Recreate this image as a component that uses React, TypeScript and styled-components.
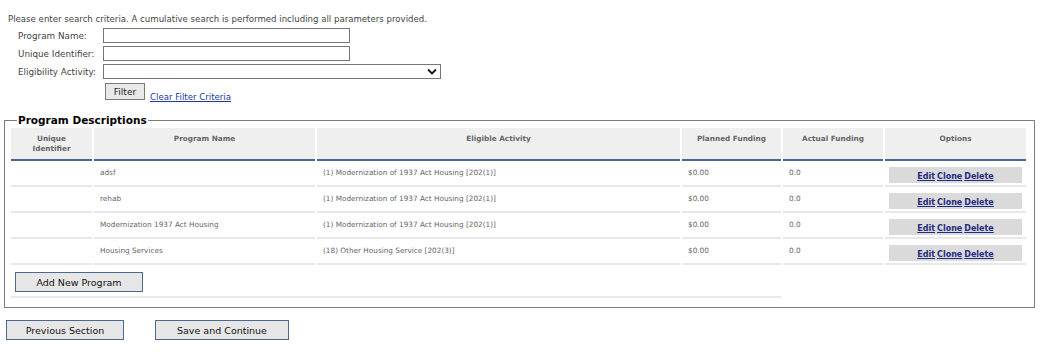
import React from 'react';
import styled, { createGlobalStyle } from 'styled-components';

const GlobalStyle = createGlobalStyle`
  body {
    margin: 0;
    background: #ffffff;
    font-family: "DejaVu Sans", Verdana, sans-serif;
    color: #444444;
  }
`;

const Page = styled.div`
  padding: 14px 8px 0 4px;
  width: 1030px;
`;

const Intro = styled.div`
  font-size: 8.6px;
  padding-left: 4px;
  line-height: 11px;
`;

const Criteria = styled.div`
  display: grid;
  grid-template-columns: 85px auto;
  row-gap: 3px;
  align-items: center;
  margin: 3px 0 0 14px;
`;

const Label = styled.label`
  font-size: 8.8px;
  color: #444444;
`;

const TextInput = styled.input`
  box-sizing: border-box;
  width: 247px;
  height: 15px;
  border: 1px solid #767676;
  border-radius: 0;
  padding: 0;
`;

const SelectBox = styled.div`
  box-sizing: border-box;
  width: 338px;
  height: 15px;
  border: 1px solid #767676;
  display: flex;
  justify-content: flex-end;
  align-items: center;
  padding-right: 3px;
`;

const FilterRow = styled.div`
  grid-column: 2;
  display: flex;
  align-items: flex-end;
  gap: 5px;
  margin-top: 1px;
  padding-left: 2px;
`;

const SmallButton = styled.button`
  box-sizing: border-box;
  height: 17px;
  width: 40px;
  padding: 0;
  font-family: "DejaVu Sans", Verdana, sans-serif;
  font-size: 9px;
  color: #222222;
  background: #e9e9e9;
  border: 1px solid #7a7a7a;
  border-radius: 0;
`;

const LinkText = styled.a`
  font-size: 8.6px;
  color: #1a3c9a;
  text-decoration: underline;
  margin-bottom: -2px;
`;

const Fieldset = styled.fieldset`
  margin: 13px 0 0 0;
  padding: 0 6px 7px 7px;
  border: 1px solid #7d7d7d;
  width: 1029px;
  box-sizing: border-box;
`;

const Legend = styled.legend`
  font-size: 10.5px;
  font-weight: bold;
  color: #000000;
  padding: 0 1px;
  margin-left: 5px;
  line-height: 14px;
`;

const Table = styled.table`
  border-spacing: 2px;
  margin: -1px 0 0 -3px;
  font-size: 7.3px;
  width: 1018px;
  table-layout: fixed;
`;

const Th = styled.th<{ $w: number }>`
  width: ${(p) => p.$w}px;
  background: #efefef;
  color: #666666;
  font-weight: bold;
  vertical-align: top;
  padding: 6px 2px 0;
  height: 25px;
  line-height: 10px;
  border-bottom: 2px solid #4a6790;
  box-sizing: content-box;
`;

const Td = styled.td`
  color: #666666;
  vertical-align: top;
  height: 24px;
  padding: 5px 6px 0;
  box-sizing: border-box;
  border-bottom: 2px solid #e8e8e8;
`;

const OptionsTd = styled(Td)`
  padding: 3px 4px 0;
`;

const OptionsBar = styled.div`
  background: #dadada;
  height: 16px;
  display: flex;
  justify-content: center;
  align-items: center;
  gap: 2px;
  margin-top: 1px;
`;

const OptionLink = styled.a`
  color: #1f2a80;
  font-weight: bold;
  font-size: 8px;
  text-decoration: underline;
  margin-top: 3px;
`;

const FootTd = styled.td<{ $line?: boolean }>`
  padding: 5px 4px 4px;
  border-bottom: ${(p) => (p.$line ? '2px solid #e8e8e8' : 'none')};
`;

const BigButton = styled.button<{ $w: number }>`
  box-sizing: border-box;
  width: ${(p) => p.$w}px;
  height: 20px;
  padding: 0;
  font-family: "DejaVu Sans", Verdana, sans-serif;
  font-size: 9.5px;
  color: #111111;
  background: #e6e6e6;
  border: 1px solid #4b6a8e;
  border-radius: 0;
`;

const BottomBar = styled.div`
  display: flex;
  gap: 31px;
  margin: 12px 0 0 2px;
`;

const programs = [
  { name: 'adsf', activity: '(1) Modernization of 1937 Act Housing [202(1)]' },
  { name: 'rehab', activity: '(1) Modernization of 1937 Act Housing [202(1)]' },
  { name: 'Modernization 1937 Act Housing', activity: '(1) Modernization of 1937 Act Housing [202(1)]' },
  { name: 'Housing Services', activity: '(18) Other Housing Service [202(3)]' },
];

export default function App() {
  return (
    <Page>
      <GlobalStyle />
      <Intro>Please enter search criteria. A cumulative search is performed including all parameters provided.</Intro>
      <Criteria>
        <Label>Program Name:</Label>
        <TextInput />
        <Label>Unique Identifier:</Label>
        <TextInput />
        <Label>Eligibility Activity:</Label>
        <SelectBox>
          <svg width="10" height="7" viewBox="0 0 10 7">
            <path d="M1 1.5 L5 5.5 L9 1.5" fill="none" stroke="#111" strokeWidth="1.8" />
          </svg>
        </SelectBox>
        <FilterRow>
          <SmallButton>Filter</SmallButton>
          <LinkText href="#">Clear Filter Criteria</LinkText>
        </FilterRow>
      </Criteria>
      <Fieldset>
        <Legend>Program Descriptions</Legend>
        <Table>
          <thead>
            <tr>
              <Th $w={77}>Unique<br />Identifier</Th>
              <Th $w={217}>Program Name</Th>
              <Th $w={359}>Eligible Activity</Th>
              <Th $w={95}>Planned Funding</Th>
              <Th $w={96}>Actual Funding</Th>
              <Th $w={137}>Options</Th>
            </tr>
          </thead>
          <tbody>
            {programs.map((p) => (
              <tr key={p.name}>
                <Td />
                <Td>{p.name}</Td>
                <Td>{p.activity}</Td>
                <Td>$0.00</Td>
                <Td>0.0</Td>
                <OptionsTd>
                  <OptionsBar>
                    <OptionLink href="#">Edit</OptionLink>
                    <OptionLink href="#">Clone</OptionLink>
                    <OptionLink href="#">Delete</OptionLink>
                  </OptionsBar>
                </OptionsTd>
              </tr>
            ))}
            <tr>
              <FootTd colSpan={4} $line>
                <BigButton $w={128}>Add New Program</BigButton>
              </FootTd>
              <FootTd colSpan={2} />
            </tr>
          </tbody>
        </Table>
      </Fieldset>
      <BottomBar>
        <BigButton $w={118}>Previous Section</BigButton>
        <BigButton $w={134}>Save and Continue</BigButton>
      </BottomBar>
    </Page>
  );
}
